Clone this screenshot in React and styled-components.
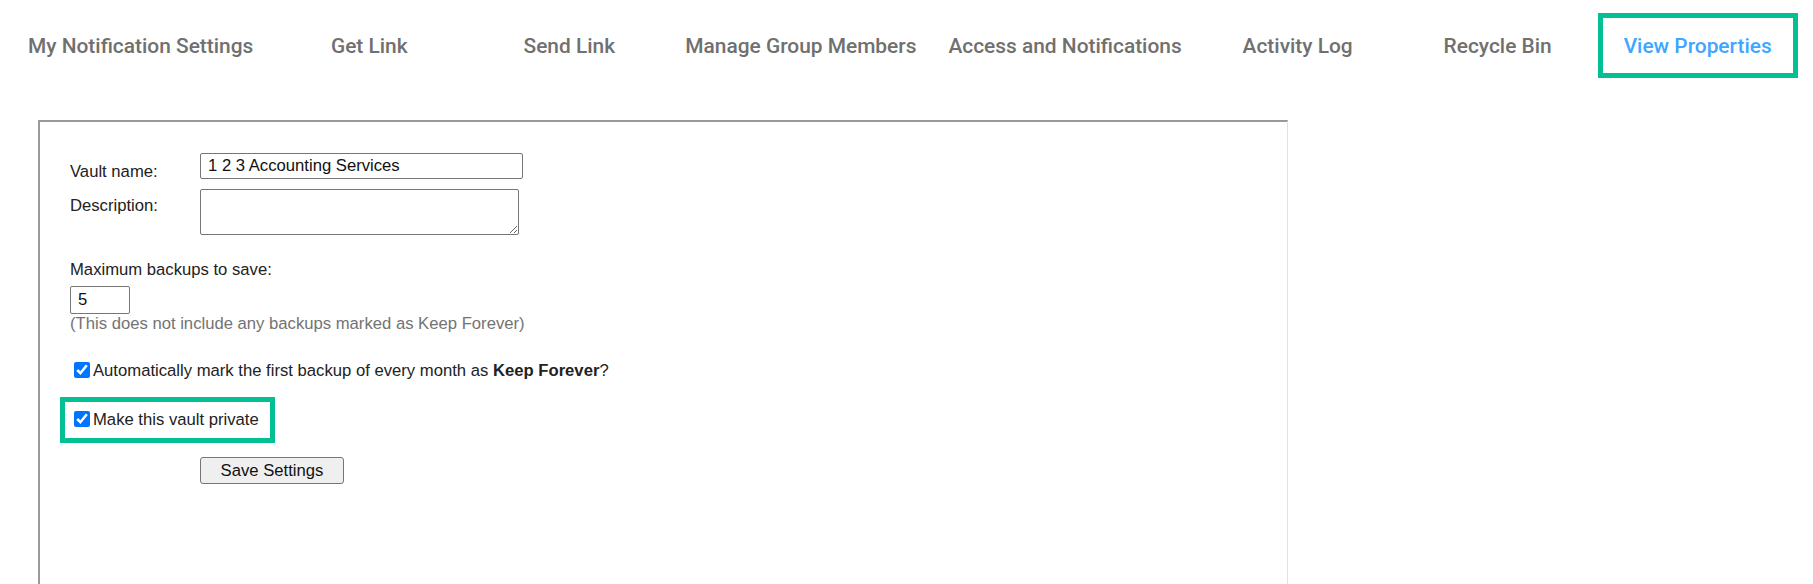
import React from 'react'
import styled, { createGlobalStyle } from 'styled-components'

const GlobalStyle = createGlobalStyle`
  body {
    margin: 0;
    background: #fff;
    font-family: "Liberation Sans", Arial, sans-serif;
    overflow: hidden;
  }
`;

const Page = styled.div`
  padding: 13px 0 0 12px;
`;

const Nav = styled.nav`
  display: flex;
  height: 65px;
`;

const NavItem = styled.div`
  min-width: 200px;
  padding: 0 16px;
  box-sizing: border-box;
  display: flex;
  align-items: center;
  justify-content: center;
  white-space: nowrap;
  font-family: Roboto, "Noto Sans", sans-serif;
  font-weight: 500;
  font-size: 20.9px;
  color: ${({ $active }) => ($active ? '#3ea6ff' : '#707070')};
  outline: ${({ $active }) => ($active ? '5px solid #03bf94' : 'none')};
  outline-offset: -5px;
  cursor: pointer;
`;

const Panel = styled.div`
  margin: 42px 0 0 26px;
  width: 1250px;
  min-height: 520px;
  box-sizing: border-box;
  border-top: 2px solid #999;
  border-left: 2px solid #999;
  border-right: 1px solid #e2e2e2;
  padding: 31px 0 0 30px;
  font-size: 16.67px;
  line-height: 19px;
  color: #222;
`;

const FieldGrid = styled.div`
  display: grid;
  grid-template-columns: 130px auto;
  row-gap: 8px;
  justify-items: start;
`;

const Label = styled.label`
  padding-top: ${({ $pad }) => $pad || 8}px;
`;

const TextInput = styled.input`
  width: ${({ $w }) => $w || 323}px;
  height: ${({ $h }) => $h || 26}px;
  box-sizing: border-box;
  border: 1px solid #767676;
  border-radius: 2px;
  padding: 1px 7px;
  font-family: "Liberation Sans", Arial, sans-serif;
  font-size: 16.67px;
  color: #111;
  background: #fff;
`;

const TextArea = styled.textarea`
  width: 319px;
  height: 46px;
  box-sizing: border-box;
  border: 1px solid #767676;
  border-radius: 2px;
  font-family: "Liberation Sans", Arial, sans-serif;
  font-size: 16.67px;
`;

const Block = styled.div`
  margin-top: ${({ $top }) => $top || 0}px;
`;

const Hint = styled.div`
  color: #737373;
`;

const CheckRow = styled.label`
  display: flex;
  align-items: center;
  margin-top: ${({ $top }) => $top || 0}px;
`;

const Check = styled.input`
  width: 16px;
  height: 16px;
  margin: 3px 3px 3px 4px;
  accent-color: #0075ff;
`;

const Highlight = styled.div`
  display: inline-flex;
  margin: 16px 0 0 -10px;
  border: 5px solid #03bf94;
  padding: 6px 11px 8px 5px;
`;

const SaveButton = styled.button`
  display: block;
  margin: 14px 0 0 130px;
  width: 144px;
  height: 27px;
  background: #efefef;
  border: 1px solid #767676;
  border-radius: 3px;
  font-family: "Liberation Sans", Arial, sans-serif;
  font-size: 16.67px;
  color: #111;
`;

const tabs = [
  'My Notification Settings',
  'Get Link',
  'Send Link',
  'Manage Group Members',
  'Access and Notifications',
  'Activity Log',
  'Recycle Bin',
  'View Properties',
];

export default function App() {
  return (
    <>
      <GlobalStyle />
      <Page>
        <Nav>
          {tabs.map((t) => (
            <NavItem key={t} $active={t === 'View Properties'}>{t}</NavItem>
          ))}
        </Nav>
        <Panel>
          <FieldGrid>
            <Label $pad={9}>Vault name:</Label>
            <TextInput defaultValue="1 2 3 Accounting Services" />
            <Label $pad={7}>Description:</Label>
            <TextArea />
          </FieldGrid>

          <Block $top={25}>
            <div>Maximum backups to save:</div>
            <Block $top={7}>
              <TextInput $w={60} $h={28} defaultValue="5" />
            </Block>
            <Hint>(This does not include any backups marked as Keep Forever)</Hint>
          </Block>

          <CheckRow $top={26}>
            <Check type="checkbox" defaultChecked />
            <span>Automatically mark the first backup of every month as <b>Keep Forever</b>?</span>
          </CheckRow>

          <Highlight>
            <CheckRow>
              <Check type="checkbox" defaultChecked />
              <span>Make this vault private</span>
            </CheckRow>
          </Highlight>

          <SaveButton>Save Settings</SaveButton>
        </Panel>
      </Page>
    </>
  )
}
